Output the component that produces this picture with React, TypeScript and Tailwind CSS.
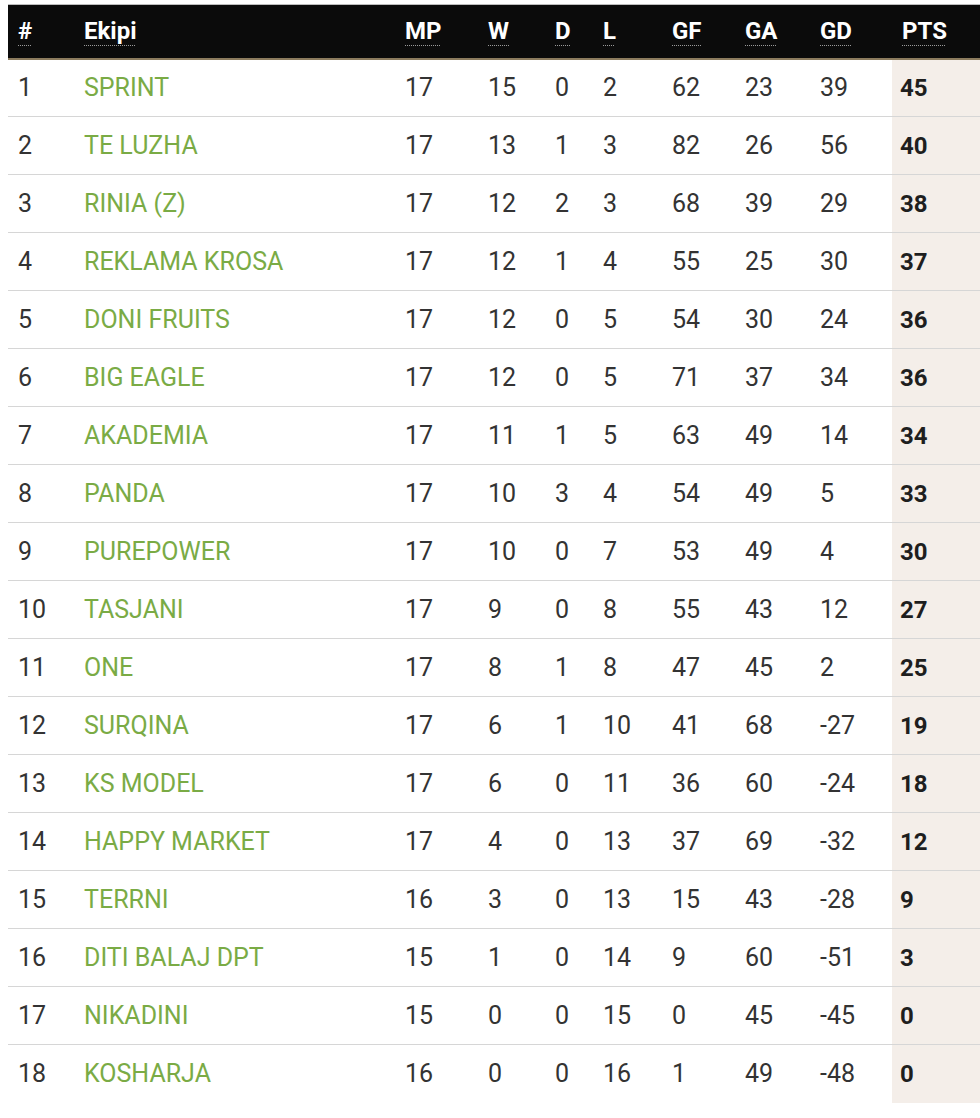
import React from 'react'

type Row = [number, string, number, number, number, number, number, number, number, number]

const rows: Row[] = [
  [1, 'SPRINT', 17, 15, 0, 2, 62, 23, 39, 45],
  [2, 'TE LUZHA', 17, 13, 1, 3, 82, 26, 56, 40],
  [3, 'RINIA (Z)', 17, 12, 2, 3, 68, 39, 29, 38],
  [4, 'REKLAMA KROSA', 17, 12, 1, 4, 55, 25, 30, 37],
  [5, 'DONI FRUITS', 17, 12, 0, 5, 54, 30, 24, 36],
  [6, 'BIG EAGLE', 17, 12, 0, 5, 71, 37, 34, 36],
  [7, 'AKADEMIA', 17, 11, 1, 5, 63, 49, 14, 34],
  [8, 'PANDA', 17, 10, 3, 4, 54, 49, 5, 33],
  [9, 'PUREPOWER', 17, 10, 0, 7, 53, 49, 4, 30],
  [10, 'TASJANI', 17, 9, 0, 8, 55, 43, 12, 27],
  [11, 'ONE', 17, 8, 1, 8, 47, 45, 2, 25],
  [12, 'SURQINA', 17, 6, 1, 10, 41, 68, -27, 19],
  [13, 'KS MODEL', 17, 6, 0, 11, 36, 60, -24, 18],
  [14, 'HAPPY MARKET', 17, 4, 0, 13, 37, 69, -32, 12],
  [15, 'TERRNI', 16, 3, 0, 13, 15, 43, -28, 9],
  [16, 'DITI BALAJ DPT', 15, 1, 0, 14, 9, 60, -51, 3],
  [17, 'NIKADINI', 15, 0, 0, 15, 0, 45, -45, 0],
  [18, 'KOSHARJA', 16, 0, 0, 16, 1, 49, -48, 0],
]

const headers = ['#', 'Ekipi', 'MP', 'W', 'D', 'L', 'GF', 'GA', 'GD', 'PTS']

export default function App() {
  return (
    <div className="w-[980px] min-h-[1118px] bg-white pt-[4px] pl-[8px] overflow-hidden" style={{ fontFamily: 'Roboto, "Liberation Sans", sans-serif' }}>
      <table className="table-fixed w-[972px] border-collapse">
        <colgroup>
          <col className="w-[66px]" />
          <col className="w-[321px]" />
          <col className="w-[83px]" />
          <col className="w-[67px]" />
          <col className="w-[48px]" />
          <col className="w-[69px]" />
          <col className="w-[73px]" />
          <col className="w-[75px]" />
          <col className="w-[82px]" />
          <col className="w-[88px]" />
        </colgroup>
        <thead>
          <tr className="h-[54px] bg-[#0b0b0b] border-t border-[#bdbdbd] border-b-2 border-b-[#8c7c5e]">
            {headers.map((h) => (
              <th key={h} className="text-left pl-[10px] text-white font-bold text-[24px] align-middle">
                <span className="underline decoration-dotted decoration-[#9a9a9a] decoration-1 underline-offset-[6px]">{h}</span>
              </th>
            ))}
          </tr>
        </thead>
        <tbody>
          {rows.map((r, i) => (
            <tr key={r[0]} className={i < rows.length - 1 ? 'h-[58px] border-b-[1.5px] border-[#d6d6d6]' : 'h-[58px]'}>
              <td className="pl-[10px] text-[25px] text-[#333]">{r[0]}</td>
              <td className="pl-[10px] text-[25px] text-[#7aab45] whitespace-nowrap">{r[1]}</td>
              {r.slice(2, 9).map((v, j) => (
                <td key={j} className="pl-[10px] text-[25px] text-[#333]">{v}</td>
              ))}
              <td className="pl-[8px] text-[24px] font-bold text-[#1e1e1e] bg-[#f4eee9]">{r[9]}</td>
            </tr>
          ))}
        </tbody>
      </table>
    </div>
  )
}
